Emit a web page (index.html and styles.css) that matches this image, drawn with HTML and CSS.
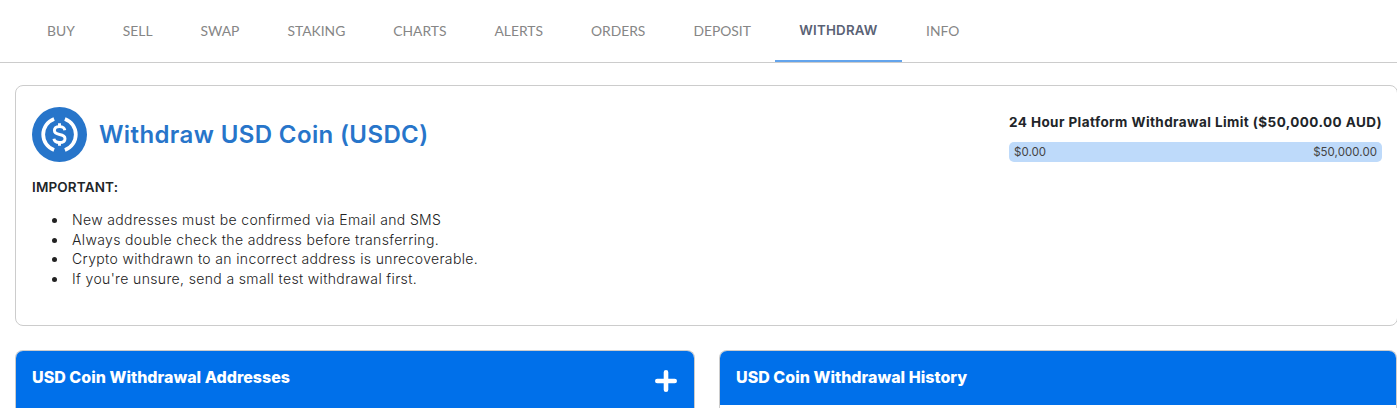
FILE: index.html
```html
<!DOCTYPE html>
<html lang="en">
<head>
<meta charset="utf-8">
<title>Withdraw USD Coin</title>
<link rel="stylesheet" href="styles.css">
</head>
<body>
<nav class="tabs">
  <a class="tab">BUY</a>
  <a class="tab">SELL</a>
  <a class="tab">SWAP</a>
  <a class="tab">STAKING</a>
  <a class="tab">CHARTS</a>
  <a class="tab">ALERTS</a>
  <a class="tab">ORDERS</a>
  <a class="tab">DEPOSIT</a>
  <a class="tab active">WITHDRAW</a>
  <a class="tab">INFO</a>
</nav>
<main class="content">
  <section class="info-card">
    <div class="info-left">
      <div class="title-row">
        <svg class="coin" viewBox="0 0 56 56" aria-hidden="true">
          <circle cx="28" cy="28" r="28" fill="#2775ca"/>
          <g fill="none" stroke="#fff" stroke-width="3.8">
            <path d="M22.5 12.2A16.8 16.8 0 0 0 22.5 43.8"/>
            <path d="M33.5 12.2A16.8 16.8 0 0 1 33.5 43.8"/>
          </g>
          <g fill="none" stroke="#fff" stroke-width="3">
            <path d="M33.4 23.6c-.4-2.6-2.6-3.6-5.4-3.6-3 0-5.2 1.500-5.200 4 0 2.600 2 3.400 5.200 4 3.400.6 5.600 1.400 5.600 4.200 0 2.600-2.400 4-5.600 4-3 0-5.300-1.200-5.700-3.800"/>
            <path d="M28 16.500v4M28 35.500v4"/>
          </g>
        </svg>
        <h1 class="title">Withdraw USD Coin (USDC)</h1>
      </div>
      <p class="important">IMPORTANT:</p>
      <ul class="notes">
        <li>New addresses must be confirmed via Email and SMS</li>
        <li>Always double check the address before transferring.</li>
        <li>Crypto withdrawn to an incorrect address is unrecoverable.</li>
        <li>If you're unsure, send a small test withdrawal first.</li>
      </ul>
    </div>
    <aside class="limit">
      <h2 class="limit-title">24 Hour Platform Withdrawal Limit ($50,000.00 AUD)</h2>
      <div class="limit-bar"><span>$0.00</span><span>$50,000.00</span></div>
    </aside>
  </section>
  <div class="panels">
    <section class="panel">
      <header class="panel-head panel-head-action">
        <h2 class="panel-title">USD Coin Withdrawal Addresses</h2>
        <svg class="plus" viewBox="0 0 22 22" aria-hidden="true"><path d="M11 2.300v17.400M2.300 11h17.400" stroke="#fff" stroke-width="4.600" stroke-linecap="round"/></svg>
      </header>
    </section>
    <section class="panel">
      <header class="panel-head">
        <h2 class="panel-title">USD Coin Withdrawal History</h2>
      </header>
    </section>
  </div>
</main>
</body>
</html>
```
FILE: styles.css
```css
* { box-sizing: border-box; }
html, body { margin: 0; height: 408px; overflow: hidden; background: #fff; }
body { font-family: "Inter", "Open Sans", sans-serif; color: #212529; }
.tabs { display: flex; height: 63px; padding-left: 23px; border-bottom: 1px solid #ccc; }
.tab { display: flex; align-items: center; justify-content: center; height: 62px; padding: 0 24px 1px; font-family: "Lato", "Inter", sans-serif; font-size: 13.850px; color: #868686; }
.tab.active { font-family: "Inter", sans-serif; font-size: 13.300px; letter-spacing: .2px; font-weight: 600; color: #5a6275; border-bottom: 2px solid #63a4ec; padding: 0 24.500px; }
.content { padding: 22px 0 0 15px; }
.info-card { display: flex; justify-content: space-between; height: 241px; margin-right: -1px; padding: 21px 15px 0 16px; border: 1px solid #ccc; border-radius: 8px; }
.title-row { display: flex; align-items: center; gap: 12px; }
.coin { width: 55px; height: 55px; }
.title { margin: 0; font-size: 24px; font-weight: 600; letter-spacing: .38px; color: #2775ca; }
.important { margin: 17px 0 0; font-size: 13.500px; font-weight: 600; line-height: 17px; color: #212529; letter-spacing: .15px; }
.notes { margin: 14px 0 0; padding-left: 36px; font-size: 14px; font-weight: 300; letter-spacing: .36px; line-height: 19.500px; color: #222; }
.notes li { padding-left: 4px; }
.limit { width: 373px; padding-top: 5px; }
.limit-title { margin: 0; font-size: 13.500px; line-height: 20px; font-weight: 700; letter-spacing: .42px; white-space: nowrap; }
.limit-bar { display: flex; justify-content: space-between; align-items: center; height: 20px; margin-top: 10px; padding: 0 5px; border-radius: 5px; background: #bedafa; font-size: 11.500px; letter-spacing: .05px; color: #444; }
.panels { display: grid; grid-template-columns: 680px 678px; gap: 24px; margin-top: 24px; }
.panel { height: 58px; border: 1px solid #ccc; border-bottom: 0; border-radius: 8px 8px 0 0; overflow: hidden; }
.panel-head { display: flex; justify-content: space-between; align-items: flex-start; padding: 15px 16px 17px; background: #0070ea; }
.panel-head-action { padding-bottom: 16px; }
.panel-title { margin: 0; font-size: 16px; line-height: 22px; font-weight: 800; letter-spacing: .02px; color: #fff; white-space: nowrap; }
.plus { width: 22px; height: 22px; margin: 4px 1px 0 0; }
```
